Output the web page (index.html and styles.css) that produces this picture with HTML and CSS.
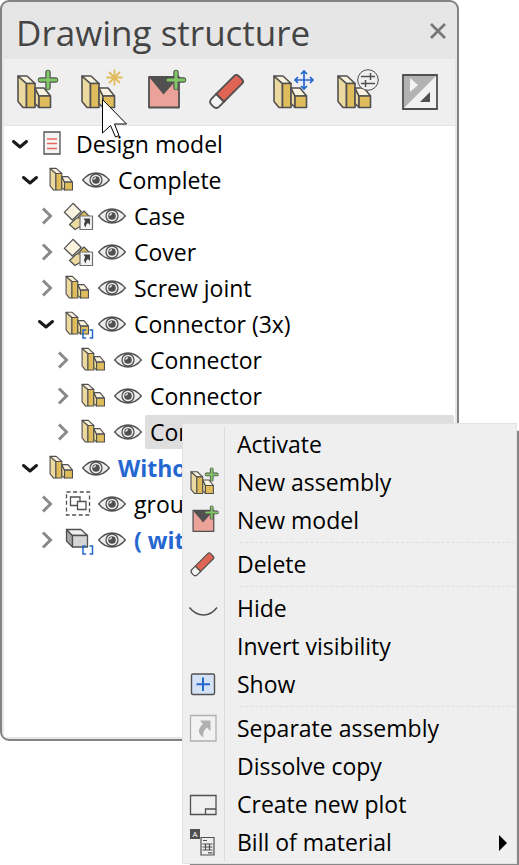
FILE: index.html
```html
<!DOCTYPE html>
<html lang="en">
<head>
  <meta charset="UTF-8" />
  <meta name="viewport" content="width=device-width, initial-scale=1.0" />
  <title>Drawing structure</title>
  <link rel="stylesheet" href="styles.css">
</head>
<body>
  <!-- shared icon shapes -->
  <svg class="defs" aria-hidden="true">
    <defs>
      <g id="assembly" stroke="#505050" stroke-width="1.6" stroke-linejoin="round">
        <path fill="#ecd9a0" d="M2 8l8.500 7.500v24H7l-5-6z" />
        <path fill="#faf3e0" d="M2 8h9l8 7.500h-8.500z" />
        <path fill="#e0bd5c" d="M10.500 15.500H19v24h-8.500z" />
        <path fill="#ecd9a0" d="M19 20l4 8v11.500l-4-4z" />
        <path fill="#faf3e0" d="M19 20h9l6.500 8H23z" />
        <path fill="#e0bd5c" d="M23 28h11.500v11.500H23z" />
      </g>
      <g id="plus" fill="none">
        <path stroke="#505050" stroke-width="5.400" stroke-linecap="round" d="M32 4.500v15M24.500 12h15" />
        <path stroke="#82c766" stroke-width="3" stroke-linecap="round" d="M32 4v16M24 12h16" />
      </g>
      <g id="model">
        <path fill="#eba298" d="M5 9h30v30H5z" />
        <path fill="#505050" d="M5 9h30L19.500 26.500z" />
        <path fill="none" stroke="#505050" stroke-width="1.800" stroke-linejoin="round" d="M5 9h30v30.500H5z" />
      </g>
      <g id="eraser" transform="translate(18.500 23.500) rotate(-45)" stroke="#505050" stroke-width="1.800">
        <path fill="#f4f4f4" d="M-9-5.500h-6.500q-4.500 0-4.500 4.500v2q0 4.500 4.500 4.500H-9z" />
        <path fill="#e06455" d="M-9-5.500h25.500q3 0 3 3v5q0 3-3 3H-9z" />
      </g>
      <g id="eye" fill="none" stroke="#505050">
        <path fill="#eee" stroke-width="1.300" d="M.700 8Q6.500 1 14 1t13.300 7Q21.500 15 14 15T.700 8z" />
        <circle cx="14" cy="8" r="6" fill="#eee" stroke-width="1.300" />
        <circle cx="14" cy="8" r="3.800" fill="#505050" stroke="none" />
        <path stroke="#eee" stroke-width="1.400" d="M11.800 7.800q.2-2 2.200-2.200" />
      </g>
      <g id="brackets" fill="none" stroke="#2467d1" stroke-width="1.500">
        <path d="M22 20h-3v8h3M25.500 20h3v8h-3" />
      </g>
      <g id="linked" stroke="#505050" stroke-width="1.200" stroke-linejoin="round">
        <path fill="#e0bd5c" d="M14 15l6-6 6 6v4H14z" />
        <path fill="#ecd9a0" d="M5.500 22.500l7-6.500H17v8l-6 3.500z" />
        <path fill="#faf3e0" d="M.300 10.300l8.700-9 8.300 8.200-9 8.500z" />
        <path fill="#f4f4f4" stroke="#707070" d="M16 14h12.500v13.500H16z" />
        <path fill="#404040" stroke="none" d="M19.500 16.500h6.500v6.500l-2-2q-3 2-1.800 4.500-3.700-2.500-1-6.500z" />
      </g>
      <path id="open" fill="none" stroke="#1a1a1a" stroke-width="3" stroke-linecap="round" stroke-linejoin="round" d="M3.500 7.500l6.500 5.500 6.500-5.500" />
      <path id="closed" fill="none" stroke="#8a8a8a" stroke-width="3" d="M7 2.500l7.500 7.500L7 17.500" />
    </defs>
  </svg>

  <main class="panel">
    <header>
      <h1>Drawing structure</h1>
      <button class="close" aria-label="Close">
        <svg width="16" height="16" viewBox="0 0 16 16"><path fill="none" stroke="#787878" stroke-width="2.800" d="M1 1l14 14M15 1L1 15" /></svg>
      </button>
    </header>

    <div class="toolbar">
      <button aria-label="New assembly">
        <svg viewBox="0 0 44 44"><use href="#assembly" /><use href="#plus" /></svg>
      </button>
      <button aria-label="Activate assembly">
        <svg viewBox="0 0 44 44"><use href="#assembly" />
          <path stroke="#dfbb5b" stroke-width="1.800" d="M34.500 1.500v16M26.500 9.500h16M29 4l11 11M40 4L29 15" />
        </svg>
      </button>
      <button aria-label="New model">
        <svg viewBox="0 0 44 44"><use href="#model" /><use href="#plus" /></svg>
      </button>
      <button aria-label="Delete">
        <svg viewBox="0 0 44 44"><use href="#eraser" /></svg>
      </button>
      <button aria-label="Move">
        <svg viewBox="0 0 44 44"><use href="#assembly" />
          <path fill="none" stroke="#2467d1" stroke-width="1.700" d="M32 3v18M23 12h18M29 6l3-3 3 3M29 18l3 3 3-3M26 9l-3 3 3 3M38 9l3 3-3 3" />
        </svg>
      </button>
      <button aria-label="Settings">
        <svg viewBox="0 0 44 44"><use href="#assembly" />
          <circle cx="32" cy="12" r="10.300" fill="#efefef" stroke="#505050" />
          <path fill="none" stroke="#505050" stroke-width="1.500" d="M25 8.500h14M25 15.500h14M34.500 5v7M29.500 12v7" />
        </svg>
      </button>
      <button aria-label="Invert display">
        <svg viewBox="0 0 44 44">
          <path fill="#f2f2f2" d="M3 7h34v34H3z" />
          <path fill="#b2b2b2" d="M3 7h34L3 41z" />
          <path fill="#f4f4f4" d="M10 10l8 7-8 7z" />
          <path fill="#505050" d="M30 24v10H20z" />
          <path fill="none" stroke="#505050" stroke-width="1.800" d="M3 7h34v34H3z" />
        </svg>
      </button>
    </div>

    <ul class="tree">
      <li>
        <div class="row root">
          <button class="toggle" aria-label="Collapse"><svg viewBox="0 0 20 20"><use href="#open" /></svg></button>
          <svg class="icon" viewBox="0 0 28 28">
            <path fill="#f4f4f4" stroke="#505050" stroke-width="1.300" d="M6 2h16v22H6z" />
            <path stroke="#e8695c" stroke-width="1.300" d="M9 9h10M9 13.500h10M9 18.500h10" />
          </svg>
          <span class="name">Design model</span>
        </div>
        <ul>
          <li>
            <div class="row">
              <button class="toggle" aria-label="Collapse"><svg viewBox="0 0 20 20"><use href="#open" /></svg></button>
              <svg class="icon" viewBox="-1 4.6 40.6 40.6"><use href="#assembly" /></svg>
              <button class="eye" aria-label="Hide"><svg viewBox="0 0 28 16"><use href="#eye" /></svg></button>
              <span class="name">Complete</span>
            </div>
            <ul>
              <li class="row">
                <button class="toggle" aria-label="Expand"><svg viewBox="0 0 20 20"><use href="#closed" /></svg></button>
                <svg class="icon" viewBox="0 0 28 28"><use href="#linked" /></svg>
                <button class="eye" aria-label="Hide"><svg viewBox="0 0 28 16"><use href="#eye" /></svg></button>
                <span class="name">Case</span>
              </li>
              <li class="row">
                <button class="toggle" aria-label="Expand"><svg viewBox="0 0 20 20"><use href="#closed" /></svg></button>
                <svg class="icon" viewBox="0 0 28 28"><use href="#linked" /></svg>
                <button class="eye" aria-label="Hide"><svg viewBox="0 0 28 16"><use href="#eye" /></svg></button>
                <span class="name">Cover</span>
              </li>
              <li class="row">
                <button class="toggle" aria-label="Expand"><svg viewBox="0 0 20 20"><use href="#closed" /></svg></button>
                <svg class="icon" viewBox="-1 4.6 40.6 40.6"><use href="#assembly" /></svg>
                <button class="eye" aria-label="Hide"><svg viewBox="0 0 28 16"><use href="#eye" /></svg></button>
                <span class="name">Screw joint</span>
              </li>
              <li>
                <div class="row">
                  <button class="toggle" aria-label="Collapse"><svg viewBox="0 0 20 20"><use href="#open" /></svg></button>
                  <svg class="icon" viewBox="0 0 28 28"><use href="#assembly" transform="translate(.7 -3.2) scale(.69)" /><use href="#brackets" /></svg>
                  <button class="eye" aria-label="Hide"><svg viewBox="0 0 28 16"><use href="#eye" /></svg></button>
                  <span class="name">Connector (3x)</span>
                </div>
                <ul>
                  <li class="row">
                    <button class="toggle" aria-label="Expand"><svg viewBox="0 0 20 20"><use href="#closed" /></svg></button>
                    <svg class="icon" viewBox="-1 4.6 40.6 40.6"><use href="#assembly" /></svg>
                    <button class="eye" aria-label="Hide"><svg viewBox="0 0 28 16"><use href="#eye" /></svg></button>
                    <span class="name">Connector</span>
                  </li>
                  <li class="row">
                    <button class="toggle" aria-label="Expand"><svg viewBox="0 0 20 20"><use href="#closed" /></svg></button>
                    <svg class="icon" viewBox="-1 4.6 40.6 40.6"><use href="#assembly" /></svg>
                    <button class="eye" aria-label="Hide"><svg viewBox="0 0 28 16"><use href="#eye" /></svg></button>
                    <span class="name">Connector</span>
                  </li>
                  <li class="row selected">
                    <button class="toggle" aria-label="Expand"><svg viewBox="0 0 20 20"><use href="#closed" /></svg></button>
                    <svg class="icon" viewBox="-1 4.6 40.6 40.6"><use href="#assembly" /></svg>
                    <button class="eye" aria-label="Hide"><svg viewBox="0 0 28 16"><use href="#eye" /></svg></button>
                    <span class="name">Con</span>
                  </li>
                </ul>
              </li>
            </ul>
          </li>
          <li>
            <div class="row active">
              <button class="toggle" aria-label="Collapse"><svg viewBox="0 0 20 20"><use href="#open" /></svg></button>
              <svg class="icon" viewBox="-1 4.6 40.6 40.6"><use href="#assembly" /></svg>
              <button class="eye" aria-label="Hide"><svg viewBox="0 0 28 16"><use href="#eye" /></svg></button>
              <span class="name">Witho</span>
            </div>
            <ul>
              <li class="row">
                <button class="toggle" aria-label="Expand"><svg viewBox="0 0 20 20"><use href="#closed" /></svg></button>
                <svg class="icon" viewBox="0 0 28 28" fill="none" stroke="#505050" stroke-width="1.300">
                  <path stroke-dasharray="4 2.600" d="M2.500 2h23v23h-23z" />
                  <path d="M13 15.500H6.500V7H16v4" />
                  <path d="M13.500 11.500h8.500v8h-8.500z" />
                </svg>
                <button class="eye" aria-label="Hide"><svg viewBox="0 0 28 16"><use href="#eye" /></svg></button>
                <span class="name">grou</span>
              </li>
              <li class="row active">
                <button class="toggle" aria-label="Expand"><svg viewBox="0 0 20 20"><use href="#closed" /></svg></button>
                <svg class="icon" viewBox="0 0 28 28">
                  <g stroke="#505050" stroke-width="1.300" stroke-linejoin="round">
                    <path fill="#a8a8a8" d="M2.500 3.500l6 6v11.500l-6-6z" />
                    <path fill="#f0f0f0" d="M2.500 3.500H17l6.500 6h-15z" />
                    <path fill="#d6d6d6" d="M8.500 9.500h15V21h-15z" />
                  </g>
                  <use href="#brackets" />
                </svg>
                <button class="eye" aria-label="Hide"><svg viewBox="0 0 28 16"><use href="#eye" /></svg></button>
                <span class="name">( wit</span>
              </li>
            </ul>
          </li>
        </ul>
      </li>
    </ul>
  </main>

  <div class="menu">
    <button><span class="glyph"></span><span class="label">Activate</span></button>
    <button>
      <svg class="glyph" viewBox="-0.9 2.6 43.5 43.5"><use href="#assembly" /><use href="#plus" /></svg>
      <span class="label">New assembly</span>
    </button>
    <button>
      <svg class="glyph" viewBox="-0.9 2.6 43.5 43.5"><use href="#model" /><use href="#plus" /></svg>
      <span class="label">New model</span>
    </button>
    <hr>
    <button>
      <svg class="glyph" viewBox="-0.9 2.6 43.5 43.5"><use href="#eraser" /></svg>
      <span class="label">Delete</span>
    </button>
    <hr>
    <button>
      <svg class="glyph" viewBox="0 0 30 30"><path fill="none" stroke="#505050" stroke-width="1.500" d="M.500 13.500Q6.500 21 14.500 21T28 13.500" /></svg>
      <span class="label">Hide</span>
    </button>
    <button><span class="glyph"></span><span class="label">Invert visibility</span></button>
    <button>
      <svg class="glyph" viewBox="0 0 30 30">
        <rect x="2.500" y="4" width="23" height="20.500" rx="1.500" fill="#d5e2f5" stroke="#505050" stroke-width="1.400" />
        <path stroke="#2467d1" stroke-width="2" d="M14 7.500v13.500M7.500 14.200h13.500" />
      </svg>
      <span class="label">Show</span>
    </button>
    <hr>
    <button>
      <svg class="glyph" viewBox="0 0 30 30">
        <path fill="#f2f2f2" stroke="#b0b0b0" stroke-width="1.300" d="M1.500 1.500h25.500v25.500H1.500z" />
        <path fill="#b0b0b0" d="M11 6.500h10.500v10.500l-3.500-3.500q-5 4-3.500 10-9-6-.5-13.500z" />
      </svg>
      <span class="label">Separate assembly</span>
    </button>
    <button><span class="glyph"></span><span class="label">Dissolve copy</span></button>
    <button>
      <svg class="glyph" viewBox="0 0 30 30"><path fill="none" stroke="#505050" stroke-width="1.300" d="M1.500 5.500H27v19H1.500zM16.500 24.500v-5.500H27" /></svg>
      <span class="label">Create new plot</span>
    </button>
    <button>
      <svg class="glyph" viewBox="0 0 30 30">
        <path fill="#505050" d="M1 1h10v10H1z" />
        <text x="6" y="9" text-anchor="middle">A</text>
        <path fill="none" stroke="#505050" stroke-width="1.200" d="M12 9.500h13V27H12zM14 12.500h4M13.500 16h10M13.500 19h10M13.500 22h10M16.500 16v6M20.500 16v6M19 24.800h4.500" />
      </svg>
      <span class="label">Bill of material</span>
      <svg class="arrow" width="8" height="16" viewBox="0 0 8 16"><path d="M0 0l8 8-8 8z" /></svg>
    </button>
  </div>

  <svg class="cursor" width="28" height="42" viewBox="0 0 28 42">
    <path fill="#fff" stroke="#000" d="M.500.500v33.500l8-7.500 5 11.500 3.500-1.500-4.500-11.500h12z" />
  </svg>
</body>
</html>
```
FILE: styles.css
```css
* {
  box-sizing: border-box;
}
body {
  font-family: "Open Sans", "Noto Sans", sans-serif;
  font-size: 23px;
  margin: 0;
  min-height: 100vh;
  background: #fff;
  color: #000;
  position: relative;
}
button {
  font: inherit;
  color: inherit;
  background: none;
  border: 0;
  padding: 0;
}
svg {
  display: block;
  overflow: visible;
}
.defs {
  position: absolute;
  width: 0;
  height: 0;
}

.panel {
  margin-right: 60px;
  padding: 0 2px 2px;
  background: #e6e6e6;
  border: 2px solid #838383;
  border-radius: 9px;
}
header {
  display: flex;
  align-items: center;
  justify-content: space-between;
  height: 57px;
  padding: 4px 9px 0 12px;
}
h1 {
  margin: 0;
  font-size: 35px;
  font-weight: 400;
  line-height: 48px;
  color: #444;
}
.close {
  margin-bottom: 4px;
}
.toolbar {
  display: flex;
  height: 67px;
  padding: 0 1px 5px 2px;
  background: #efefef;
  border-bottom: 1px solid #e3e3e3;
}
.toolbar button {
  flex: 1;
}
.toolbar svg {
  width: 44px;
  height: 44px;
  margin: 0 auto;
}

.tree {
  min-height: 611px;
  padding: 0 1px 0 6px;
  background: #fff;
}
ul {
  margin: 0;
  padding: 0 0 0 16px;
  list-style: none;
}
.tree > li > ul {
  padding-left: 10px;
}
.row {
  display: flex;
  align-items: center;
  height: 36px;
  white-space: nowrap;
}
.toggle {
  width: 20px;
  height: 20px;
  margin-right: 8px;
}
.icon {
  flex: none;
  width: 28px;
  height: 28px;
  margin-right: 6px;
}
.root .icon {
  margin-right: 2px;
}
.eye {
  width: 28px;
  height: 16px;
}
.name {
  margin-left: 3px;
  padding: 0 5px;
  line-height: 34px;
}
.selected .name {
  flex: 1;
  background: #dedede;
  border-radius: 2px;
}
.active .name {
  color: #2467d1;
  font-weight: 700;
}

.menu {
  position: absolute;
  top: 423px;
  left: 182px;
  right: 2px;
  padding: 2px 0 1px;
  background: #efefef;
  border: 1px solid #e2e2e2;
  box-shadow: 5px 5px 1px -3px #888;
}
/* line between the icons and the labels */
.menu::before {
  content: "";
  position: absolute;
  top: 2px;
  bottom: 1px;
  left: 41px;
  border-left: 1px solid #dcdcdc;
}
.menu button {
  display: flex;
  align-items: center;
  width: 100%;
  height: 38px;
  padding: 0 9px 0 6px;
  text-align: left;
}
.glyph {
  flex: none;
  width: 30px;
  height: 30px;
  margin-right: 18px;
}
.glyph text {
  font-size: 8px;
  fill: #fff;
}
.label {
  padding-bottom: 2px;
  line-height: 34px;
}
.arrow {
  margin-left: auto;
}
hr {
  height: 1px;
  margin: 2px 1px 3px 57px;
  border: 0;
  border-top: 1px dashed #dedede;
}

.cursor {
  position: absolute;
  top: 99px;
  left: 102px;
}
```
